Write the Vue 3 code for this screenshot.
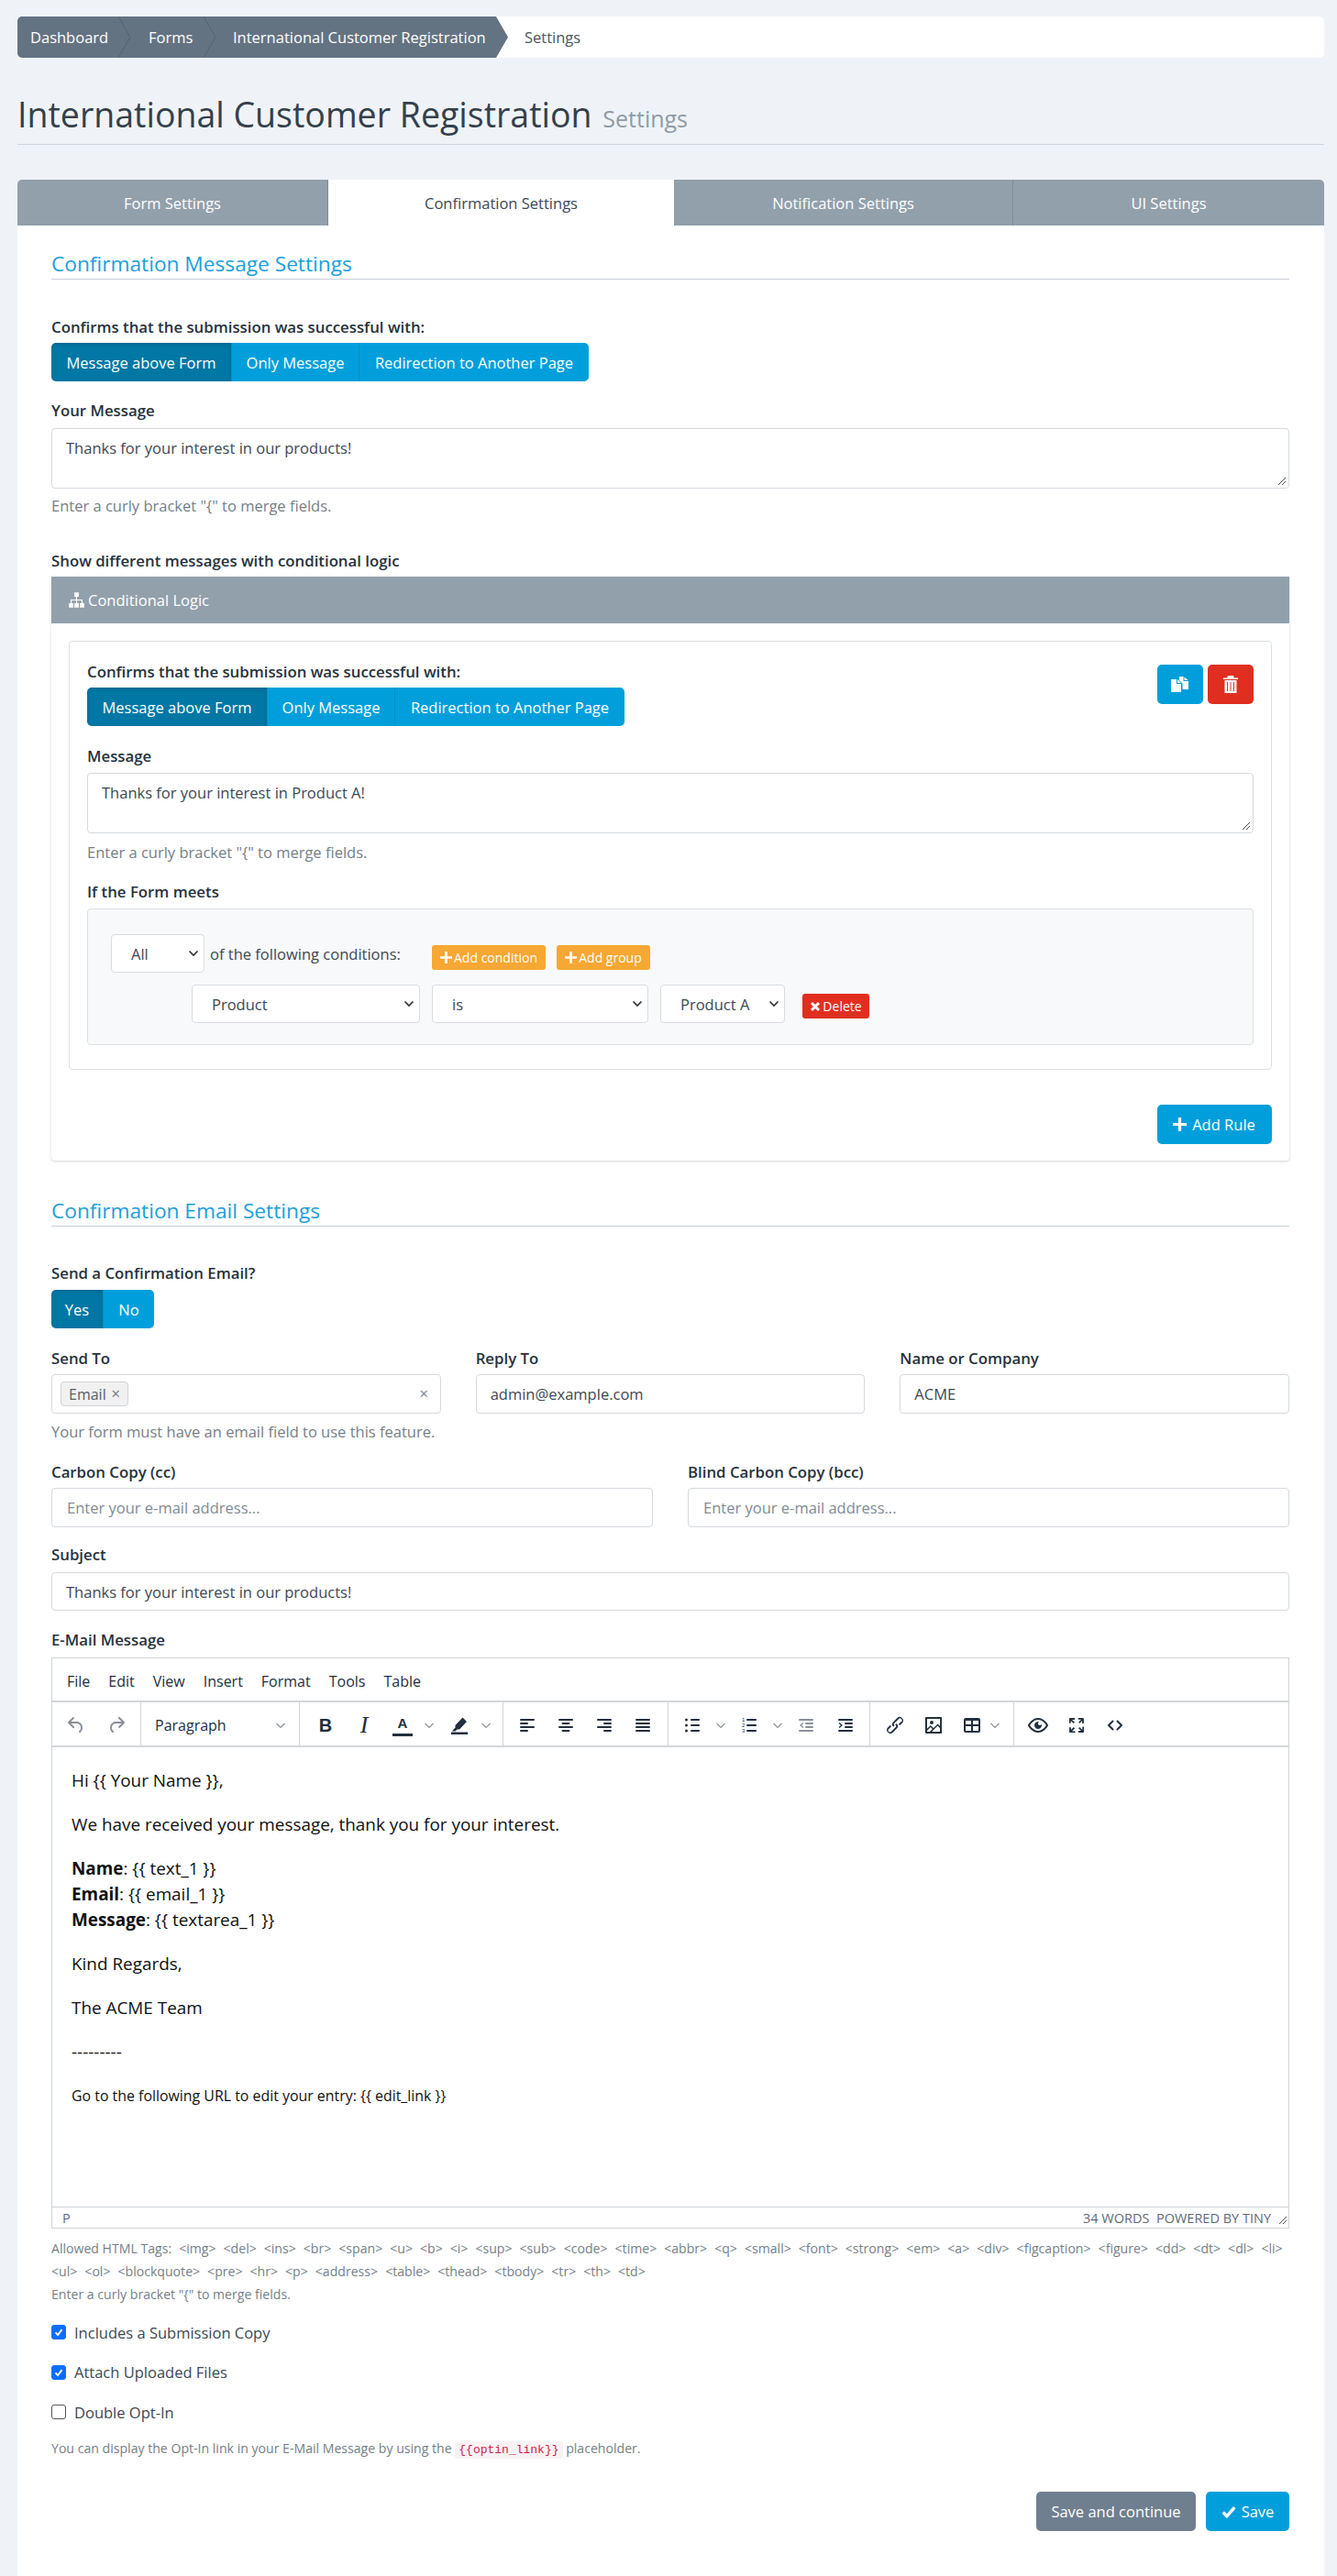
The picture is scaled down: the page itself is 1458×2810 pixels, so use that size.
<template>
  <div class="page">
    <!-- breadcrumb -->
    <nav class="crumbs">
      <div class="crumb-dark">
        <span class="crumb c1">Dashboard</span>
        <svg class="crumb-sep" viewBox="0 0 13 45" preserveAspectRatio="none"><polyline points="0,0 13,22.5 0,45" /></svg>
        <span class="crumb c2">Forms</span>
        <svg class="crumb-sep" viewBox="0 0 13 45" preserveAspectRatio="none"><polyline points="0,0 13,22.5 0,45" /></svg>
        <span class="crumb c3">International Customer Registration</span>
      </div>
      <span class="crumb-last">Settings</span>
    </nav>

    <h1 class="title">International Customer Registration <small>Settings</small></h1>

    <div class="tabs">
      <div
        v-for="t in tabs"
        :key="t.label"
        class="tab"
        :class="{ active: t.active }"
        :style="{ width: t.width + 'px' }"
      >{{ t.label }}</div>
    </div>

    <div class="card">
      <h2 class="section">Confirmation Message Settings</h2>

      <label class="lbl first">Confirms that the submission was successful with:</label>
      <div class="btn-group">
        <span class="seg on w1">Message above Form</span>
        <span class="seg w2">Only Message</span>
        <span class="seg w3">Redirection to Another Page</span>
      </div>

      <label class="lbl gap22 mb9">Your Message</label>
      <div class="area">Thanks for your interest in our products!<svg class="grip" viewBox="0 0 10 10"><path d="M9 1 1 9M9 5 5 9" /></svg></div>
      <div class="help">Enter a curly bracket "{" to merge fields.</div>

      <label class="lbl logic-label">Show different messages with conditional logic</label>
      <div class="panel">
        <div class="panel-head">
          <svg class="ic-sitemap" viewBox="0 0 16 16"><path d="M6 1h4v4H6zM1 11h4v4H1zM6 11h4v4H6zM11 11h4v4h-4z" /><path d="M7.500 5h1v2.500H13.500V11h-1V8.500h-4V11h-1V8.500h-4V11h-1V7.500H7.500z" /></svg>
          Conditional Logic
        </div>
        <div class="panel-body">
          <div class="rule">
            <div class="rule-top">
              <div>
                <label class="lbl">Confirms that the submission was successful with:</label>
                <div class="btn-group">
                  <span class="seg on w1">Message above Form</span>
                  <span class="seg w2">Only Message</span>
                  <span class="seg w3">Redirection to Another Page</span>
                </div>
              </div>
              <div class="rule-actions">
                <span class="icon-btn blue">
                  <svg viewBox="0 0 19 17" width="19" height="17"><path d="M0 3h6v5h5v9H0z" fill="#fff" /><path d="M7 3l4 4H7z" fill="#fff" /><path d="M9 0h4.500v5H19v9h-6.500V7.500L9 4z" fill="#fff" /><path d="M14.500.500 18.500 4h-4z" fill="#fff" /></svg>
                </span>
                <span class="icon-btn red">
                  <svg viewBox="0 0 16 19" width="16" height="19"><path d="M5 0h6l1 2.500h4V4H0V2.500h4zM1.500 5h13v14h-13zM4 7v10h1V7zm3.500 0v10h1V7zM11 7v10h1V7z" fill="#fff" fill-rule="evenodd" /></svg>
                </span>
              </div>
            </div>

            <label class="lbl gap23">Message</label>
            <div class="area">Thanks for your interest in Product A!<svg class="grip" viewBox="0 0 10 10"><path d="M9 1 1 9M9 5 5 9" /></svg></div>
            <div class="help h2">Enter a curly bracket "{" to merge fields.</div>

            <label class="lbl gap23">If the Form meets</label>
            <div class="query">
              <div class="q-row">
                <div class="select all">All<svg class="chev" viewBox="0 0 12 8"><path d="M1.500 1.500 6 6l4.500-4.500" /></svg></div>
                <span class="q-text">of the following conditions:</span>
                <span class="mini orange first-mini"><svg class="mini-plus" viewBox="0 0 12 12"><path d="M6 0v12M0 6h12" /></svg>Add condition</span>
                <span class="mini orange second-mini"><svg class="mini-plus" viewBox="0 0 12 12"><path d="M6 0v12M0 6h12" /></svg>Add group</span>
              </div>
              <div class="q-row second">
                <div class="select s1">Product<svg class="chev" viewBox="0 0 12 8"><path d="M1.500 1.500 6 6l4.500-4.500" /></svg></div>
                <div class="select s2">is<svg class="chev" viewBox="0 0 12 8"><path d="M1.500 1.500 6 6l4.500-4.500" /></svg></div>
                <div class="select s3">Product A<svg class="chev" viewBox="0 0 12 8"><path d="M1.500 1.500 6 6l4.500-4.500" /></svg></div>
                <span class="mini red del"><svg class="del-x" viewBox="0 0 12 12"><path d="M2 2l8 8M10 2l-8 8" /></svg>Delete</span>
              </div>
            </div>
          </div>

          <div class="add-row">
            <span class="btn blue add-rule"><svg class="plus" viewBox="0 0 14 14"><path d="M7 0v14M0 7h14" /></svg>Add Rule</span>
          </div>
        </div>
      </div>

      <h2 class="section second-section">Confirmation Email Settings</h2>

      <label class="lbl first send">Send a Confirmation Email?</label>
      <div class="btn-group">
        <span class="seg on yes">Yes</span>
        <span class="seg no">No</span>
      </div>

      <div class="cols three">
        <div>
          <label class="lbl">Send To</label>
          <div class="input tags">
            <span class="tag">Email<span class="tag-x">✕</span></span>
            <span class="clear">✕</span>
          </div>
          <div class="help h3">Your form must have an email field to use this feature.</div>
        </div>
        <div>
          <label class="lbl">Reply To</label>
          <div class="input">admin@example.com</div>
        </div>
        <div>
          <label class="lbl">Name or Company</label>
          <div class="input">ACME</div>
        </div>
      </div>

      <div class="cols two">
        <div>
          <label class="lbl">Carbon Copy (cc)</label>
          <div class="input ph">Enter your e-mail address...</div>
        </div>
        <div>
          <label class="lbl">Blind Carbon Copy (bcc)</label>
          <div class="input ph">Enter your e-mail address...</div>
        </div>
      </div>

      <label class="lbl subj">Subject</label>
      <div class="input subject">Thanks for your interest in our products!</div>

      <label class="lbl mail">E-Mail Message</label>
      <div class="editor">
        <div class="menu">
          <span v-for="m in menu" :key="m">{{ m }}</span>
        </div>
        <div class="toolbar">
          <div class="tb g1">
            <span class="ti off"><svg viewBox="0 0 24 24"><path d="M6.400 8H12c3.700 0 6.200 2 6.800 5.100.6 2.700-.4 5.600-2.300 6.800a1 1 0 01-1-1.800c1.100-.6 1.800-2.700 1.400-4.600-.5-2.100-2.100-3.500-4.900-3.500H6.400l3.300 3.300a1 1 0 11-1.400 1.400l-5-5a1 1 0 010-1.400l5-5a1 1 0 011.400 1.400L6.400 8z" /></svg></span>
            <span class="ti off"><svg viewBox="0 0 24 24"><path d="M17.600 10H12c-2.800 0-4.400 1.400-4.900 3.500-.4 2 .3 4 1.400 4.600a1 1 0 11-1 1.800c-2-1.200-2.900-4.100-2.300-6.800.6-3 3-5.100 6.800-5.100h5.600l-3.300-3.300a1 1 0 111.400-1.400l5 5a1 1 0 010 1.400l-5 5a1 1 0 01-1.400-1.400l3.300-3.300z" /></svg></span>
          </div>
          <div class="tb g2">
            <span class="para">Paragraph</span>
            <svg class="tchev" viewBox="0 0 10 10"><path d="M.5 3l4.500 4.500L9.500 3" /></svg>
          </div>
          <div class="tb g3">
            <span class="ti letter bold">B</span>
            <span class="ti letter ital">I</span>
            <span class="ti letter under">A</span>
            <span class="tc"><svg class="tchev" viewBox="0 0 10 10"><path d="M.5 3l4.500 4.500L9.500 3" /></svg></span>
            <span class="ti marker"><svg viewBox="0 0 24 24"><path d="M15.500 3.500 20 8l-8 8.500H9.500L7.500 18.500H4l3.500-4V12zM3 19.500h18V22H3z" /></svg></span>
            <span class="tc"><svg class="tchev" viewBox="0 0 10 10"><path d="M.5 3l4.500 4.500L9.500 3" /></svg></span>
          </div>
          <div class="tb g4">
            <span v-for="a in aligns" :key="a.name" class="ti">
              <svg viewBox="0 0 24 24"><rect v-for="(r, i) in a.bars" :key="i" :x="r[0]" :y="5 + i * 4" :width="r[1]" height="2" rx="1" /></svg>
            </span>
          </div>
          <div class="tb g5">
            <span class="ti"><svg viewBox="0 0 24 24"><path d="M11 5h8c.6 0 1 .4 1 1s-.4 1-1 1h-8a1 1 0 010-2zm0 6h8c.6 0 1 .4 1 1s-.4 1-1 1h-8a1 1 0 010-2zm0 6h8c.6 0 1 .4 1 1s-.4 1-1 1h-8a1 1 0 010-2z" /><circle cx="5.500" cy="6" r="1.500" /><circle cx="5.500" cy="12" r="1.500" /><circle cx="5.500" cy="18" r="1.500" /></svg></span>
            <span class="tc"><svg class="tchev" viewBox="0 0 10 10"><path d="M.5 3l4.500 4.500L9.500 3" /></svg></span>
            <span class="ti"><svg viewBox="0 0 24 24"><path d="M10 5h9c.6 0 1 .4 1 1s-.4 1-1 1h-9a1 1 0 010-2zm0 6h9c.6 0 1 .4 1 1s-.4 1-1 1h-9a1 1 0 010-2zm0 6h9c.6 0 1 .4 1 1s-.4 1-1 1h-9a1 1 0 010-2z" /><text class="num" x="4" y="8">1</text><text class="num" x="4" y="14">2</text><text class="num" x="4" y="20">3</text></svg></span>
            <span class="tc"><svg class="tchev" viewBox="0 0 10 10"><path d="M.5 3l4.500 4.500L9.500 3" /></svg></span>
            <span class="ti off"><svg viewBox="0 0 24 24"><rect x="4" y="5" width="16" height="2" rx="1" /><rect x="11" y="9" width="9" height="2" rx="1" /><rect x="11" y="13" width="9" height="2" rx="1" /><rect x="4" y="17" width="16" height="2" rx="1" /><path d="M8.500 9 5 12l3.500 3 .9-.9L7 12l2.400-2.100z" /></svg></span>
            <span class="ti"><svg viewBox="0 0 24 24"><rect x="4" y="5" width="16" height="2" rx="1" /><rect x="11" y="9" width="9" height="2" rx="1" /><rect x="11" y="13" width="9" height="2" rx="1" /><rect x="4" y="17" width="16" height="2" rx="1" /><path d="M5.500 9 9 12l-3.500 3-.9-.9L7 12 4.600 9.900z" /></svg></span>
          </div>
          <div class="tb g6">
            <span class="ti"><svg viewBox="0 0 24 24"><path d="M6.200 12.300a1 1 0 011.400 1.400l-2 2a2 2 0 102.600 2.800l4.800-4.800a1 1 0 000-1.400 1 1 0 111.400-1.300 2.900 2.900 0 010 4L9.600 20a3.900 3.900 0 01-5.500-5.500l2-2zm11.600-.6a1 1 0 01-1.400-1.400l2.100-2a2 2 0 10-2.700-2.800L11 10a1 1 0 000 1.400A1 1 0 119.600 13a2.900 2.900 0 010-4L14.400 4a3.900 3.900 0 015.500 5.500l-2 2z" /></svg></span>
            <span class="ti"><svg viewBox="0 0 24 24"><path d="M5 15.700l3.300-3.200c.3-.3.700-.3 1 0L12 15l4.100-4c.3-.4.800-.4 1 0l2 1.900V5H5v10.700zM5 18V19h3l2.800-2.900-2-2L5 17.900zm14-3l-2.500-2.400-6.400 6.500H19v-4zM4 3h16c.6 0 1 .4 1 1v16c0 .6-.4 1-1 1H4a1 1 0 01-1-1V4c0-.6.400-1 1-1zm6 8a2 2 0 100-4 2 2 0 000 4z" fill-rule="evenodd" /></svg></span>
            <span class="ti"><svg viewBox="0 0 24 24"><path d="M19 4a2 2 0 012 2v12a2 2 0 01-2 2H5a2 2 0 01-2-2V6c0-1.100.9-2 2-2h14zm0 9h-6v5h6v-5zm-8 0H5v5h6v-5zm8-6h-6v4h6V7zm-8 0H5v4h6V7z" fill-rule="evenodd" /></svg></span>
            <span class="tc narrow"><svg class="tchev" viewBox="0 0 10 10"><path d="M.5 3l4.500 4.500L9.500 3" /></svg></span>
          </div>
          <div class="tb g7">
            <span class="ti"><svg viewBox="0 0 24 24"><path d="M3.500 12.500c.5.800 1.100 1.600 1.800 2.300 2 2 4.200 3.200 6.700 3.200s4.700-1.200 6.700-3.200a16.200 16.200 0 002.100-2.800 15.700 15.700 0 00-2.100-2.800c-2-2-4.200-3.200-6.700-3.200a9.300 9.300 0 00-6.700 3.200A16.200 16.200 0 003.200 12c0 .2.200.3.300.5zm-2.400-1l.7-1.200L4 7.800C6.200 5.400 8.900 4 12 4c3 0 5.800 1.400 8.100 3.800a18.200 18.200 0 012.800 3.700v1l-.7 1.200-2.100 2.500c-2.300 2.400-5 3.800-8.100 3.800-3 0-5.800-1.400-8.100-3.800a18.200 18.200 0 01-2.800-3.700 1 1 0 010-1zm12-3.300a2 2 0 102.700 2.600 4 4 0 11-2.600-2.600z" fill-rule="evenodd" /></svg></span>
            <span class="ti"><svg viewBox="0 0 24 24"><path d="M15.300 10l-1.200-1.300 2.900-3h-2.300a.9.900 0 110-1.700H19c.5 0 .9.400.9.900v4.400a.9.900 0 11-1.800 0V7l-2.900 3zm0 4l3 3v-2.300a.9.900 0 111.700 0V19c0 .5-.4.900-.9.900h-4.400a.9.900 0 110-1.800H17l-3-2.900 1.300-1.200zM10 15.400l-2.900 3h2.300a.9.900 0 110 1.700H5a.9.900 0 01-.9-.9v-4.400a.9.900 0 111.800 0V17l2.900-3 1.200 1.300zM8.700 10L5.700 7v2.300a.9.900 0 01-1.700 0V5c0-.5.400-.9.900-.9h4.400a.9.900 0 010 1.800H7l3 2.900-1.300 1.200z" /></svg></span>
            <span class="ti"><svg viewBox="0 0 24 24"><path class="code" d="M9.500 7.500 5 12l4.500 4.500M14.500 7.500 19 12l-4.500 4.500" /></svg></span>
          </div>
        </div>

        <div class="content">
          <p>Hi {{ '{{' }} Your Name }},</p>
          <p>We have received your message, thank you for your interest.</p>
          <p>
            <strong>Name</strong>: {{ '{{' }} text_1 }}<br />
            <strong>Email</strong>: {{ '{{' }} email_1 }}<br />
            <strong>Message</strong>: {{ '{{' }} textarea_1 }}
          </p>
          <p>Kind Regards,</p>
          <p>The ACME Team</p>
          <p>---------</p>
          <p class="tiny">Go to the following URL to edit your entry: {{ '{{' }} edit_link }}</p>
        </div>

        <div class="status">
          <span>P</span>
          <span class="status-right">34 WORDS&nbsp;&nbsp;POWERED BY TINY<svg class="grip2" viewBox="0 0 10 10"><path d="M9 1 1 9M9 5 5 9" /></svg></span>
        </div>
      </div>

      <div class="tags-help">
        <div class="one-line"><span>Allowed HTML Tags:</span><span v-for="t in tags1" :key="t">&lt;{{ t }}&gt;</span></div>
        <div class="one-line"><span v-for="t in tags2" :key="t">&lt;{{ t }}&gt;</span></div>
        <div>Enter a curly bracket "{" to merge fields.</div>
      </div>

      <div class="check c-a"><span class="box on"><svg viewBox="0 0 16 16"><path d="M4 8.500 7 11.500 12 4.800" /></svg></span>Includes a Submission Copy</div>
      <div class="check c-b"><span class="box on"><svg viewBox="0 0 16 16"><path d="M4 8.500 7 11.500 12 4.800" /></svg></span>Attach Uploaded Files</div>
      <div class="check c-b"><span class="box"></span>Double Opt-In</div>
      <div class="optin">You can display the Opt-In link in your E-Mail Message by using the <code>{{ '{{' }}optin_link}}</code> placeholder.</div>

      <div class="actions">
        <span class="btn gray">Save and continue</span>
        <span class="btn blue save"><svg class="check-ic" viewBox="0 0 14 14"><path d="M1.500 7.500 5.200 11.200 12.500 2.800" /></svg>Save</span>
      </div>
    </div>
  </div>
</template>

<script setup>
const tabs = [
  { label: 'Form Settings', width: 339 },
  { label: 'Confirmation Settings', width: 377, active: true },
  { label: 'Notification Settings', width: 370 },
  { label: 'UI Settings', width: 339 },
]

const menu = ['File', 'Edit', 'View', 'Insert', 'Format', 'Tools', 'Table']

const aligns = [
  { name: 'left', bars: [[4, 16], [4, 9], [4, 16], [4, 9]] },
  { name: 'center', bars: [[4, 16], [7.5, 9], [4, 16], [7.5, 9]] },
  { name: 'right', bars: [[4, 16], [11, 9], [4, 16], [11, 9]] },
  { name: 'justify', bars: [[4, 16], [4, 16], [4, 16], [4, 16]] },
]

const tags1 = ['img', 'del', 'ins', 'br', 'span', 'u', 'b', 'i', 'sup', 'sub', 'code', 'time', 'abbr', 'q', 'small', 'font', 'strong', 'em', 'a', 'div', 'figcaption', 'figure', 'dd', 'dt', 'dl', 'li']
const tags2 = ['ul', 'ol', 'blockquote', 'pre', 'hr', 'p', 'address', 'table', 'thead', 'tbody', 'tr', 'th', 'td']
</script>

<style>
html, body { margin: 0; background: #eff3f7; }
</style>

<style scoped>
.page {
  box-sizing: border-box;
  width: 1458px;
  height: 2810px;
  padding: 18px 14px 0 19px;
  overflow: hidden;
  font-family: "Open Sans", "Noto Sans", sans-serif;
  font-size: 16.500px;
  color: #3d4852;
}

/* breadcrumb */
.crumbs {
  display: flex;
  align-items: center;
  height: 45px;
  background: #fff;
  border-radius: 5px;
}
.crumb-dark {
  display: flex;
  align-items: center;
  width: 535px;
  height: 45px;
  background: #647382;
  border-radius: 5px 0 0 5px;
  clip-path: polygon(0 0, 522px 0, 100% 50%, 522px 100%, 0 100%);
  color: #fff;
}
.crumb { box-sizing: border-box; white-space: nowrap; }
.c1 { width: 110px; padding-left: 14px; }
.c2 { width: 80px; padding-left: 20px; }
.c3 { width: 306px; padding-left: 19px; }
.crumb-sep { width: 13px; height: 45px; flex: none; }
.crumb-sep polyline { fill: none; stroke: #55636f; stroke-width: 1; }
.crumb-last { margin-left: 18px; color: #4a5560; }

.title {
  box-sizing: border-box;
  height: 95px;
  margin: 0 0 38px;
  padding-top: 41px;
  border-bottom: 1px solid #cfd5dc;
  font-size: 37.500px;
  font-weight: 400;
  line-height: 42px;
  color: #34404b;
  white-space: nowrap;
}
.title small { font-size: 25px; color: #8e9ba7; margin-left: 2px; }

.tabs { display: flex; height: 50px; border-radius: 5px 5px 0 0; overflow: hidden; }
.tab {
  box-sizing: border-box;
  display: flex;
  align-items: center;
  justify-content: center;
  background: #92a0ac;
  border-right: 1px solid #7d8c99;
  color: #fff;
}
.tab:last-child { border-right: 0; }
.tab.active { background: #fff; color: #3d4852; border-right: 0; }

.card {
  box-sizing: border-box;
  height: 2564px;
  padding: 26px 38px 0 37px;
  background: #fff;
}

.section {
  box-sizing: border-box;
  height: 33px;
  margin: 0;
  border-bottom: 1px solid #c9d0d9;
  font-size: 22.700px;
  font-weight: 400;
  line-height: 32px;
  color: #1b9fdc;
}
.second-section { margin-top: 39px; }

.lbl {
  display: block;
  height: 20px;
  margin-bottom: 7px;
  font-size: 16.800px;
  font-weight: 600;
  line-height: 20px;
  color: #26323c;
  white-space: nowrap;
}
.first { margin-top: 42px; }
.gap22 { margin-top: 22px; }
.gap23 { margin-top: 23px; margin-bottom: 8px; }
.mb9 { margin-bottom: 9px; }
.send { margin-top: 41px; margin-bottom: 8px; }
.logic-label { margin-top: 40px; }
.subj { margin-top: 20px; margin-bottom: 9px; }
.mail { margin-top: 22px; margin-bottom: 9px; }

.btn-group { display: flex; width: max-content; border-radius: 5px; overflow: hidden; height: 42px; }
.seg {
  box-sizing: border-box;
  display: flex;
  align-items: center;
  justify-content: center;
  background: #009fdb;
  border-right: 1px solid #0a8fc4;
  color: #fff;
  white-space: nowrap;
}
.seg:last-child { border-right: 0; }
.seg.on { background: #0077a4; box-shadow: inset 0 2px 4px rgba(0, 0, 0, .12); }
.w1 { width: 197px; }
.w2 { width: 139px; }
.w3 { width: 250px; }
.yes { width: 57px; }
.no { width: 55px; }

.area {
  position: relative;
  box-sizing: border-box;
  height: 66px;
  padding: 9px 15px;
  border: 1px solid #d5d9de;
  border-radius: 4px;
  line-height: 24px;
  color: #3d4852;
}
.grip { position: absolute; right: 2px; bottom: 2px; width: 10px; height: 10px; }
.grip path, .grip2 path { fill: none; stroke: #555; stroke-width: 1; }
.help { height: 20px; margin-top: 9px; line-height: 20px; color: #767f87; }
.h2 { margin-top: 11px; }
.h3 { margin-top: 10px; white-space: nowrap; }

.panel { box-shadow: 0 1px 3px rgba(60, 70, 80, .25); border-radius: 0 0 4px 4px; }
.panel-head {
  display: flex;
  align-items: center;
  gap: 3px;
  height: 51px;
  padding-left: 18px;
  background: #92a0ac;
  color: #fff;
}
.ic-sitemap { width: 19px; height: 19px; fill: #fff; }
.panel-body { padding: 19px 19.500px 18px 19px; }

.rule {
  box-sizing: border-box;
  height: 468px;
  padding: 23px 19px 0;
  border: 1px solid #dcdfe3;
  border-radius: 4px;
}
.rule-top { display: flex; justify-content: space-between; }
.rule-actions { display: flex; gap: 5px; margin-top: 2px; }
.icon-btn {
  display: flex;
  align-items: center;
  justify-content: center;
  width: 50px;
  height: 43px;
  border-radius: 5px;
}
.blue { background: #009fdb; }
.red { background: #e02f20; }

.query {
  box-sizing: border-box;
  height: 149px;
  padding: 27px 0 0 25px;
  background: #f8f9fb;
  border: 1px solid #dcdfe3;
  border-radius: 4px;
}
.q-row { display: flex; align-items: center; }
.second { margin-top: 13px; padding-left: 88px; }
.select {
  position: relative;
  box-sizing: border-box;
  display: flex;
  align-items: center;
  height: 42px;
  padding-left: 21px;
  background: #fff;
  border: 1px solid #d8dce1;
  border-radius: 4px;
  white-space: nowrap;
}
.chev { position: absolute; right: 5px; top: 16px; width: 12px; height: 8px; }
.chev path { fill: none; stroke: #333; stroke-width: 1.700; }
.all { width: 102px; }
.q-text { margin-left: 6px; white-space: nowrap; width: 242px; }
.s1 { width: 249px; }
.s2 { width: 236px; margin-left: 13px; }
.s3 { width: 136px; margin-left: 13px; }
.mini {
  box-sizing: border-box;
  display: flex;
  align-items: center;
  justify-content: center;
  height: 27px;
  border-radius: 3px;
  color: #fff;
  font-size: 14px;
  white-space: nowrap;
}
.orange { background: #f7a733; }
.first-mini { width: 124px; margin-top: 9px; }
.second-mini { width: 102px; margin-left: 12px; margin-top: 9px; }
.mini-plus { width: 13px; height: 13px; margin-right: 2px; }
.mini-plus path { fill: none; stroke: #fff; stroke-width: 2.500; }
.del { width: 73px; margin-left: 19px; margin-top: 5px; }
.del-x { width: 12px; height: 12px; margin-right: 2px; }
.del-x path { fill: none; stroke: #fff; stroke-width: 3; }

.add-row { display: flex; justify-content: flex-end; margin-top: 38px; }
.btn {
  box-sizing: border-box;
  display: flex;
  align-items: center;
  justify-content: center;
  border-radius: 5px;
  color: #fff;
  white-space: nowrap;
}
.add-rule { width: 125px; height: 43px; font-size: 16.500px; }
.plus { width: 15px; height: 15px; margin-right: 6px; }
.plus path { fill: none; stroke: #fff; stroke-width: 3; }

.cols { display: grid; column-gap: 38px; }
.three { grid-template-columns: repeat(3, 1fr); margin-top: 23px; }
.two { grid-template-columns: repeat(2, 1fr); margin-top: 24px; }
.input {
  box-sizing: border-box;
  display: flex;
  align-items: center;
  height: 43px;
  padding: 0 15px;
  border: 1px solid #d5d9de;
  border-radius: 4px;
  white-space: nowrap;
}
.ph { padding-left: 16px; color: #808b95; }
.subject { height: 42px; }
.tags { justify-content: space-between; padding: 0 12px 0 9px; }
.tag {
  display: flex;
  align-items: center;
  box-sizing: border-box;
  width: 74px;
  height: 27px;
  padding: 0 4px 0 8px;
  background: #f1f1f1;
  border: 1px solid #cfd3d7;
  border-radius: 4px;
  color: #55606a;
  font-size: 16px;
}
.tag-x { margin-left: 5px; font-size: 13px; font-weight: 700; color: #7d868f; font-family: "DejaVu Sans", sans-serif; }
.clear { font-size: 13px; font-weight: 700; color: #8a929a; font-family: "DejaVu Sans", sans-serif; }

.editor { border: 1px solid #cfd3d7; }
.menu {
  box-sizing: border-box;
  display: flex;
  align-items: center;
  gap: 20px;
  height: 48px;
  padding: 4px 0 0 16px;
  border-bottom: 2px solid #d3d6d9;
  font-size: 16px;
  color: #222f3e;
}
.toolbar {
  box-sizing: border-box;
  display: flex;
  height: 49px;
  border-bottom: 2px solid #d3d6d9;
}
.tb {
  box-sizing: border-box;
  display: flex;
  align-items: center;
  height: 47px;
  padding: 3px 9px 0;
  gap: 8px;
  border-right: 1px solid #d3d6d9;
}
.tb:last-child { border-right: 0; }
.g1 { gap: 10px; }
.g2 { width: 173px; padding: 3px 15px 0; justify-content: space-between; }
.g3 { padding: 3px 10px 0 11px; }
.g4 { padding-right: 10px; }
.g5 { gap: 9px; }
.g5 .tc { margin-left: -9px; margin-right: -5px; padding-left: 3px; }
.g3 .tc { margin-left: -8px; margin-right: -4px; }
.g6 .narrow { width: 16px; margin-left: -8px; margin-right: 3px; }
.g6 { padding-left: 10px; }
.ti {
  display: flex;
  align-items: center;
  justify-content: center;
  width: 34px;
  height: 34px;
  flex: none;
  color: #222f3e;
}
.ti svg { width: 24px; height: 24px; fill: #222f3e; }
.ti.off svg { fill: #8a9098; }
.tc { box-sizing: border-box; display: flex; align-items: center; justify-content: center; width: 24px; flex: none; }
.tchev { width: 10px; height: 10px; flex: none; }
.tchev path { fill: none; stroke: #8b939b; stroke-width: 1.200; }
.num { font-size: 6px; font-family: "Liberation Sans", sans-serif; fill: #222f3e; }
.code { fill: none; stroke: #222f3e; stroke-width: 2; stroke-linecap: round; stroke-linejoin: round; }
.para { color: #222f3e; font-size: 16px; }
.letter { line-height: 1; }
.bold { font-family: "Liberation Sans", sans-serif; font-weight: 700; font-size: 20px; }
.ital { font-family: "Liberation Serif", serif; font-style: italic; font-size: 26px; }
.under {
  position: relative;
  box-sizing: border-box;
  padding-bottom: 6px;
  font-family: "Liberation Sans", sans-serif;
  font-weight: 700;
  font-size: 15px;
}
.under::after {
  content: '';
  position: absolute;
  left: 6px;
  right: 6px;
  bottom: 5px;
  height: 3.500px;
  background: #222f3e;
}

.content {
  box-sizing: border-box;
  height: 501px;
  padding: 22px 21px 0;
  font-size: 18.900px;
  line-height: 28px;
  color: #111;
}
.content p { margin: 0 0 20px; }
.content strong { font-weight: 700; }
.content .tiny { font-size: 15.900px; }

.status {
  box-sizing: border-box;
  display: flex;
  align-items: center;
  justify-content: space-between;
  height: 23px;
  padding-left: 11px;
  border-top: 1px solid #cfd3d7;
  font-size: 14.500px;
  color: #5f6a75;
}
.status-right { display: flex; align-items: center; }
.grip2 { width: 10px; height: 10px; margin: 5px 1px 0 8px; }

.tags-help {
  margin-top: 9px;
  font-size: 14.100px;
  line-height: 25px;
  color: #767f87;
  white-space: nowrap;
}
.one-line { display: flex; gap: 8px; }

.check { display: flex; align-items: center; height: 22px; color: #3d4852; }
.c-a { margin-top: 18px; }
.c-b { margin-top: 21.500px; }
.box {
  box-sizing: border-box;
  display: block;
  width: 16px;
  height: 16px;
  margin-right: 9px;
  background: #fff;
  border: 1px solid #555;
  border-radius: 3px;
}
.box.on { background: #0d6efd; border-color: #0d6efd; }
.box svg { display: block; width: 14px; height: 14px; }
.box path { fill: none; stroke: #fff; stroke-width: 2.200; }

.optin { height: 20px; margin-top: 19px; font-size: 14.100px; line-height: 20px; color: #767f87; white-space: nowrap; }
.optin code {
  padding: 2px 4px;
  background: #f9f2f4;
  border-radius: 3px;
  color: #c7254e;
  font-family: "Liberation Mono", monospace;
  font-size: 13px;
}

.actions { display: flex; justify-content: flex-end; gap: 11px; margin-top: 37px; }
.gray { width: 174px; height: 43px; background: #6f7f8f; }
.save { width: 91px; height: 43px; }
.check-ic { width: 16px; height: 16px; margin-right: 6px; }
.check-ic path { fill: none; stroke: #fff; stroke-width: 3; }
</style>
